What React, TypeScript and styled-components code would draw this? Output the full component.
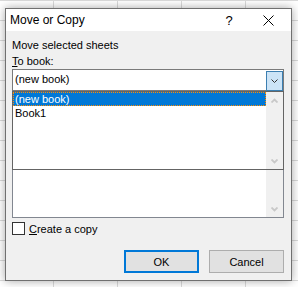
import React from "react";
import styled, { createGlobalStyle } from "styled-components";

const GlobalStyle = createGlobalStyle`
  html, body {
    margin: 0;
    padding: 0;
  }
  body {
    width: 298px;
    height: 287px;
    overflow: hidden;
    background-color: #ffffff;
    background-image:
      linear-gradient(to right, #dadada 1px, transparent 1px),
      linear-gradient(to bottom, #dadada 1px, transparent 1px);
    background-size: 64px 20px, 64px 20px;
    background-position: 53px 0, 0 0;
    font-family: "Liberation Sans", Arial, sans-serif;
  }
`;

const Dialog = styled.div`
  margin: 8px 0 0 5px;
  width: 287px;
  height: 273px;
  box-sizing: border-box;
  border: 1px solid #707070;
  background: #f0f0f0;
  box-shadow: 0 0 9px rgba(0, 0, 0, 0.35);
  display: flex;
  flex-direction: column;
`;

const TitleBar = styled.div`
  height: 22px;
  background: #ffffff;
  display: flex;
  align-items: center;
  padding-left: 4px;
`;

const Title = styled.div`
  flex: 1;
  font-size: 12px;
  color: #000;
`;

const Help = styled.div`
  width: 30px;
  margin-right: 18px;
  text-align: center;
  font-size: 13px;
  color: #000;
`;

const CloseBox = styled.div`
  width: 28px;
  height: 22px;
  display: flex;
  align-items: center;
  padding-left: 1px;
`;

const Body = styled.div`
  flex: 1;
  display: flex;
  flex-direction: column;
  padding: 6px 7px 7px 6px;
  font-size: 11px;
  color: #000;
`;

const Label = styled.div`
  height: 16px;
  line-height: 16px;
`;

const Key = styled.span`
  text-decoration: underline;
`;

const ComboWrap = styled.div`
  position: relative;
`;

const Combo = styled.div`
  height: 22px;
  box-sizing: border-box;
  border: 1px solid #7a7a7a;
  background: #fff;
  display: flex;
  align-items: stretch;
`;

const ComboText = styled.div`
  flex: 1;
  padding-left: 2px;
  line-height: 19px;
`;

const ComboButton = styled.div`
  width: 17px;
  box-sizing: border-box;
  border: 1px solid #3c7fb1;
  background: #cce4f7;
  display: flex;
  align-items: center;
  justify-content: center;
  margin: 1px 0 -1px;
`;

const DropList = styled.div`
  position: absolute;
  left: 0;
  right: 0;
  top: 22px;
  height: 79px;
  box-sizing: border-box;
  border: 1px solid #646464;
  background: #fff;
  display: flex;
  z-index: 2;
`;

const Items = styled.div`
  flex: 1;
`;

const Item = styled.div<{ $selected?: boolean }>`
  height: 14px;
  line-height: 13px;
  padding-left: 1px;
  box-sizing: border-box;
  background: ${(p) => (p.$selected ? "#0078d7" : "transparent")};
  color: ${(p) => (p.$selected ? "#fff" : "#000")};
  border: 1px dotted ${(p) => (p.$selected ? "#ff8c00" : "transparent")};
`;

const ScrollBar = styled.div`
  width: 17px;
  background: #f0f0f0;
  display: flex;
  flex-direction: column;
  justify-content: space-between;
  align-items: center;
  padding: 6px 0 5px;
  box-sizing: border-box;
`;

const SheetList = styled.div`
  height: 127px;
  box-sizing: border-box;
  border: 1px solid #828790;
  background: #fff;
  display: flex;
  justify-content: flex-end;
`;

const CheckRow = styled.label`
  display: flex;
  align-items: center;
  gap: 4px;
  margin-top: 4px;
  height: 13px;
`;

const CheckBox = styled.span`
  width: 13px;
  height: 13px;
  box-sizing: border-box;
  border: 1px solid #333;
  background: #fff;
`;

const Buttons = styled.div`
  margin-top: auto;
  display: flex;
  justify-content: flex-end;
  gap: 10px;
`;

const Button = styled.div<{ $default?: boolean }>`
  width: 75px;
  height: 23px;
  box-sizing: border-box;
  border: ${(p) => (p.$default ? "2px solid #0078d7" : "1px solid #adadad")};
  background: #e1e1e1;
  display: flex;
  align-items: center;
  justify-content: center;
  font-size: 11px;
`;

const Chevron = ({ up, color, thick }: { up?: boolean; color: string; thick?: boolean }) => (
  <svg width={7} height={5} viewBox="0 0 7 5">
    <path
      d={up ? "M0.5 4.5 L3.5 1.5 L6.5 4.5" : "M0.5 0.5 L3.5 3.5 L6.5 0.5"}
      fill="none"
      stroke={color}
      strokeWidth={thick ? 1.8 : 1}
    />
  </svg>
);

export default function App() {
  return (
    <>
      <GlobalStyle />
      <Dialog>
        <TitleBar>
          <Title>Move or Copy</Title>
          <Help>?</Help>
          <CloseBox>
            <svg width="11" height="11" viewBox="0 0 11 11">
              <path d="M0.5 0.5 L10.5 10.5 M10.5 0.5 L0.5 10.5" stroke="#000" strokeWidth="1" />
            </svg>
          </CloseBox>
        </TitleBar>
        <Body>
          <Label>Move selected sheets</Label>
          <Label>
            <Key>T</Key>o book:
          </Label>
          <ComboWrap>
            <Combo>
              <ComboText>(new book)</ComboText>
              <ComboButton>
                <Chevron color="#333" />
              </ComboButton>
            </Combo>
            <DropList>
              <Items>
                <Item $selected>(new book)</Item>
                <Item>Book1</Item>
              </Items>
              <ScrollBar>
                <Chevron up thick color="#c8c8c8" />
                <Chevron thick color="#c8c8c8" />
              </ScrollBar>
            </DropList>
            <SheetList>
              <ScrollBar>
                <Chevron up thick color="#c8c8c8" />
                <Chevron thick color="#c8c8c8" />
              </ScrollBar>
            </SheetList>
          </ComboWrap>
          <CheckRow>
            <CheckBox />
            <span>
              <Key>C</Key>reate a copy
            </span>
          </CheckRow>
          <Buttons>
            <Button $default>OK</Button>
            <Button>Cancel</Button>
          </Buttons>
        </Body>
      </Dialog>
    </>
  );
}
